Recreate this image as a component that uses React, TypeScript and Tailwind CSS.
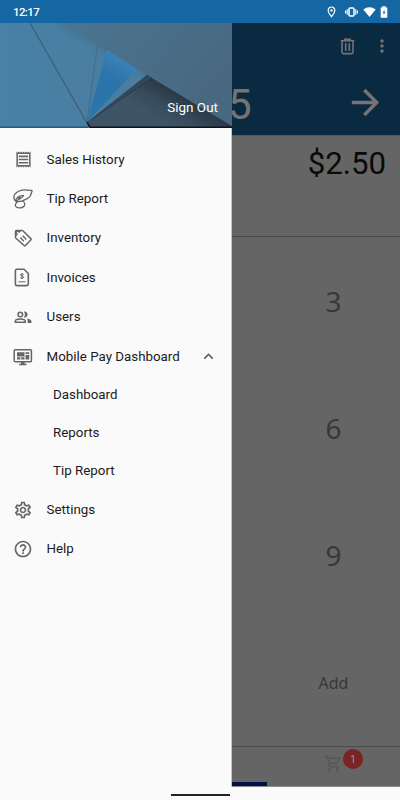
import {
  MdArrowForward,
  MdHelpOutline,
  MdKeyboardArrowUp,
  MdMoreVert,
  MdOutlineReceipt,
  MdOutlineSettings,
  MdOutlineShoppingCart,
} from "react-icons/md";
import type { ReactNode } from "react";

const topItems = [
  { text: "Sales History", icon: <MdOutlineReceipt size={19} /> },
  { text: "Tip Report", icon: <TipIcon /> },
  { text: "Inventory", icon: <TagIcon /> },
  { text: "Invoices", icon: <InvoiceIcon /> },
  { text: "Users", icon: <UsersIcon /> },
];

const dashboardItems = ["Dashboard", "Reports", "Tip Report"];

export default function App() {
  return (
    <div className="flex h-[800px] w-[400px] flex-col overflow-hidden bg-[#fafafa] font-['Roboto',sans-serif]">
      <StatusBar />
      <div className="flex h-[763.5px] shrink-0">
        <Drawer />
        <Register />
      </div>
      <div className="flex grow items-center justify-center pt-[3px]">
        <div className="h-[2px] w-[59px] bg-[#222]" />
      </div>
    </div>
  );
}

function StatusBar() {
  return (
    <div className="flex h-[23px] shrink-0 items-center bg-[#1467a2] pr-[12px] pl-[13px] text-white">
      <span className="grow pt-[2px] text-[11.5px] font-medium tracking-[-0.6px]">12:17</span>
      <svg width="9" height="12" viewBox="0 0 9 12">
        <path d="M4.5 1C2.4 1 1.2 2.5 1.2 4.3 1.2 6.8 4.5 10.7 4.5 10.7S7.8 6.8 7.8 4.3C7.8 2.5 6.6 1 4.5 1z" fill="none" stroke="#fff" strokeWidth="1.2" />
        <circle cx="4.5" cy="4.4" r="1.2" fill="#fff" />
      </svg>
      <svg className="ml-[9px]" width="13" height="12" viewBox="0 0 13 12">
        <rect x="4" y="2" width="5" height="8" rx="1" fill="none" stroke="#fff" strokeWidth="1.5" />
        <path d="M2.2 3.3v5.4M10.8 3.3v5.4M.6 4.5v3M12.4 4.5v3" stroke="#fff" strokeWidth="1.1" />
      </svg>
      <svg className="ml-[5px]" width="13" height="12" viewBox="0 0 13 12">
        <path d="M6.5 11 .3 3.6C3.8.3 9.2.3 12.7 3.6z" fill="#fff" />
      </svg>
      <svg className="ml-[4px]" width="8" height="12" viewBox="0 0 8 12">
        <path d="M.7 1.5h1.6V.3h3.4v1.2h1.6v10.200H.7z" fill="#fff" />
        <path d="M4.5 3.8 2.7 6.9h1v2.2L5.3 6H4.5z" fill="#1467a2" />
      </svg>
    </div>
  );
}

function Drawer() {
  return (
    <aside className="flex w-[232px] shrink-0 flex-col border-r border-[#c4c4c4] bg-[#fafafa]">
      <header className="relative h-[105px] w-[232px] shrink-0">
        <HeaderArt />
        <a className="absolute right-[14px] bottom-[12px] text-[13.5px] leading-[18px] text-white">Sign Out</a>
      </header>
      <nav className="flex flex-col pt-[12px] text-[13.35px] text-[#1c1c1c]">
        {topItems.map((item) => (
          <DrawerItem key={item.text} text={item.text} icon={item.icon} />
        ))}
        <DrawerItem text="Mobile Pay Dashboard" icon={<MonitorIcon />}>
          <MdKeyboardArrowUp size={19} className="ml-auto text-[#5c5c5c]" />
        </DrawerItem>
        {dashboardItems.map((text) => (
          <a key={text} className="flex h-[37.9px] items-center pl-[53px]">
            {text}
          </a>
        ))}
        <DrawerItem text="Settings" icon={<MdOutlineSettings size={20} />} />
        <DrawerItem text="Help" icon={<MdHelpOutline size={20} />} />
      </nav>
    </aside>
  );
}

function DrawerItem(props: { text: string; icon: ReactNode; children?: ReactNode }) {
  return (
    <a className="flex h-[39.4px] items-center pr-[13px] pl-[13px]">
      <span className="flex w-[33.5px] shrink-0 text-[#666]">
        <span className="flex w-[20px] justify-center">{props.icon}</span>
      </span>
      {props.text}
      {props.children}
    </a>
  );
}

function Register() {
  return (
    <main className="flex grow flex-col border-b border-[#8a8a8a] bg-[#656565]">
      <div className="flex h-[113px] shrink-0 flex-col border-b border-[#50585e] bg-[#0a2a42] text-[#747474]">
        <div className="flex h-[46px] items-center justify-end pr-[8px]">
          <TrashIcon />
          <MdMoreVert size={20} className="ml-[17px]" />
        </div>
        <div className="flex h-[66px] items-center justify-between pr-[14px]">
          <span className="-ml-[4px] pt-[5px] text-[42px] leading-none">5</span>
          <MdArrowForward size={41} />
        </div>
      </div>
      <div className="h-[101px] shrink-0 border-b border-[#4c4c4c] pt-[8px] pr-[14px] text-right text-[31.2px] leading-[40px] text-[#0a0a0a]">
        $2.50
      </div>
      <div className="flex grow flex-col pt-[1px] pl-[35px] text-center font-['Noto_Sans',sans-serif] text-[28px] text-[#383838]">
        <Key>3</Key>
        <Key>6</Key>
        <Key>9</Key>
        <Key>
          <span className="pt-[2px] text-[16px]">Add</span>
        </Key>
      </div>
      <footer className="relative h-[40px] shrink-0 border-t border-[#4c4c4c]">
        <MdOutlineShoppingCart size={19} className="absolute top-[7px] left-[92px] text-[#575757]" />
        <span className="absolute top-[2.5px] left-[111px] flex size-[20px] items-center justify-center rounded-full bg-[#7a2424] text-[10px] text-[#999]">
          1
        </span>
        <div className="absolute bottom-0 left-0 h-[4px] w-[35px] bg-[#001144]" />
      </footer>
    </main>
  );
}

function Key({ children }: { children: ReactNode }) {
  return <div className="flex flex-1 items-center justify-center">{children}</div>;
}

// Folded paper backdrop behind the account area
function HeaderArt() {
  return (
    <svg className="block" width="232" height="105" viewBox="0 0 232 105">
      <defs>
        <linearGradient id="base" x1="0" y1="0" x2="1" y2="0">
          <stop offset="0" stopColor="#4880a6" />
          <stop offset="1" stopColor="#4c7c9c" />
        </linearGradient>
        <linearGradient id="sheet" x1="0" y1="0" x2="1" y2="0.5">
          <stop offset="0" stopColor="#4b7592" />
          <stop offset="1" stopColor="#48687f" />
        </linearGradient>
        <linearGradient id="blue" gradientUnits="userSpaceOnUse" x1="123" y1="36" x2="112" y2="54">
          <stop offset="0" stopColor="#3c82b6" />
          <stop offset="1" stopColor="#2b75ab" />
        </linearGradient>
        <linearGradient id="dark" gradientUnits="userSpaceOnUse" x1="185" y1="75" x2="168" y2="103">
          <stop offset="0" stopColor="#293947" />
          <stop offset="0.5" stopColor="#374b5c" />
          <stop offset="1" stopColor="#3e5467" />
        </linearGradient>
        <linearGradient id="shade" gradientUnits="userSpaceOnUse" x1="105" y1="26" x2="99" y2="36">
          <stop offset="0" stopColor="#427290" stopOpacity="0.7" />
          <stop offset="1" stopColor="#4a7fa3" stopOpacity="0" />
        </linearGradient>
      </defs>
      <rect width="232" height="105" fill="url(#base)" />
      <path d="M60 0 147 52 133 62 50 0z" fill="url(#shade)" />
      <path d="M60 0H232V103L147 52z" fill="url(#sheet)" />
      <path d="M107 27 137 46 87 99z" fill="url(#blue)" />
      <path d="M147 52 232 103v1H88l-1-4z" fill="url(#dark)" />
      <path d="M147 52 152 55 87 99z" fill="#33485a" />
      <path d="M30 0 87 100" stroke="#3d5b70" strokeWidth="1.1" />
      <path d="M97.5 22 87 99" stroke="#416a88" strokeWidth="0.9" />
      <path d="M152 55 88 99" stroke="#243542" strokeWidth="0.7" />
      <path d="M0 104.3H88" stroke="#1d5c8a" strokeWidth="1.4" />
      <path d="M87 99 90 104.3H232" fill="none" stroke="#0f1419" strokeWidth="1.4" />
    </svg>
  );
}

// Hand dropping a coin
function TipIcon() {
  return (
    <svg className="shrink-0" width="20" height="20" viewBox="0 0 20 20" fill="none" stroke="currentColor" strokeWidth="1.3" strokeLinejoin="round">
      <path d="M19.3 1.3C16 1.900 12.500.3 9 1.200 5.500 2.100 2.500 3.500 1.300 6.300.7 8 .7 10.200 2.600 12M19.300 1.300C18.400 3.300 18.300 5.300 17 7.300 15 10 11.500 10.500 9.500 12" />
      <path d="M2.600 12C2.700 9.500 5.500 6.300 10.600 6.600 10 8.300 7.800 9.200 6.200 10.300 5.300 11 4 11.300 2.600 12zM4.800 9.500 7.500 8.300" />
      <path d="M2.600 12.300C5 13.200 7 12 9.500 12 12 13 12.300 15.500 11 17.300 9 19.600 4.500 19.400 2.700 17.300 1.800 16 2.600 14.300 4.300 13.300" />
    </svg>
  );
}

function TagIcon() {
  return (
    <svg className="shrink-0" width="19" height="19" viewBox="0 0 19 19" fill="none" stroke="currentColor" strokeWidth="1.5">
      <path d="M1.500 2.500q0-1 1-1H8q.6 0 1.100.5l7.700 7.600q.7.700 0 1.400l-5.300 5.500q-.7.700-1.400 0L2 9.300q-.5-.5-.5-1.100z" />
      <path d="M1.500 1.500H7.300L1.500 7.500z" fill="currentColor" strokeWidth="0.5" />
      <circle cx="3.900" cy="3.900" r="1" fill="#fafafa" stroke="none" />
      <path d="M6.300 8.600 9.800 12.300M8.700 6.700l3.600 3.700" strokeWidth="1.4" />
    </svg>
  );
}

function InvoiceIcon() {
  return (
    <svg className="mr-[3px] shrink-0" width="16" height="19" viewBox="0 0 16 19" fill="none" stroke="currentColor">
      <path d="M3 1.200H10L14.300 5.500V16q0 1.600-1.600 1.600H3q-1.600 0-1.600-1.600V2.800Q1.400 1.200 3 1.200z" strokeWidth="1.6" />
      <path d="M9.600 6.600C9 5.800 6.500 5.700 6.500 7c0 1.300 3.100.8 3.100 2.200 0 1.300-2.600 1.300-3.300.4M8 5v6" strokeWidth="1" />
      <path d="M4.500 13.800h7" strokeWidth="1" />
    </svg>
  );
}

function UsersIcon() {
  return (
    <svg className="shrink-0" width="18" height="13" viewBox="0 0 18 13" fill="none" stroke="currentColor" strokeWidth="1.5">
      <circle cx="6.300" cy="3.500" r="2.300" />
      <path d="M1.300 11.200V10.400C1.300 8.900 4.200 8.100 6.300 8.100S11.300 8.900 11.300 10.400V11.200z" />
      <path d="M9.800.6a3 3 0 1 1 0 5.800C11.300 4.700 11.300 2.300 9.800.6zM13 7.500c2.300.4 4.500 1.400 4.500 3v1.400H13.700V10.500C13.700 9.200 13.500 8.300 13 7.500z" fill="currentColor" stroke="none" />
    </svg>
  );
}

function MonitorIcon() {
  return (
    <svg className="shrink-0" width="20" height="18" viewBox="0 0 20 18" fill="none" stroke="currentColor">
      <rect x="1.200" y="1.700" width="17.200" height="12" rx="1" strokeWidth="1.5" />
      <path d="M4 4.300h7.500v4.200H4zM12.500 4.300h3.700v1.600h-3.700zM12.500 7h3.700v4.500h-3.700zM4 9.300h3.300v2.200H4zM8.200 9.300h3.300v2.200H8.200zM8 14h3.600v1.800h1.900v1.500H6.200v-1.500H8z" fill="currentColor" stroke="none" />
    </svg>
  );
}

function TrashIcon() {
  return (
    <svg width="15" height="17" viewBox="0 0 15 17" fill="none" stroke="currentColor" strokeWidth="1.6">
      <path d="M.7 2.800H14.300M4.800 2.200V1.200H10.200V2.200M2 3V14.300Q2 15.600 3.400 15.600H11.600Q13 15.600 13 14.300V3M5.700 5.300V13M9.300 5.300V13" />
    </svg>
  );
}
